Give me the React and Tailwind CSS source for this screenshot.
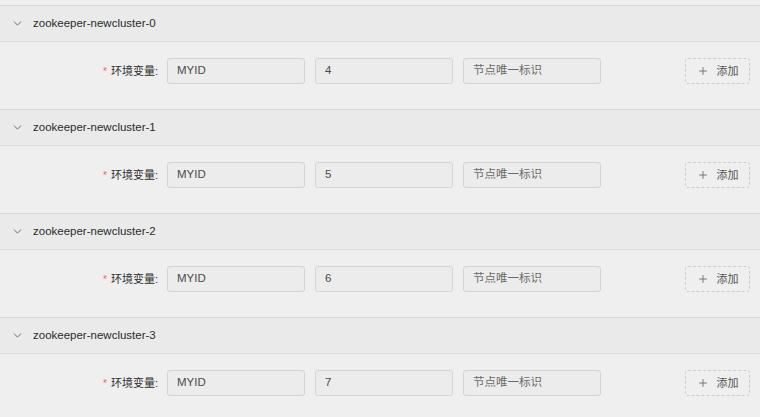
import { ChevronDown, Plus } from "lucide-react";

const clusters = [
  { name: "zookeeper-newcluster-0", id: "4" },
  { name: "zookeeper-newcluster-1", id: "5" },
  { name: "zookeeper-newcluster-2", id: "6" },
  { name: "zookeeper-newcluster-3", id: "7" },
];

function Field({ value, muted }) {
  return (
    <div
      className={`h-[26px] w-[138px] flex items-center px-[9px] rounded-[3px] border border-[#d4d4d4] bg-[#ececec] text-[11.5px] ${
        muted ? "text-[#6a6a6a]" : "text-[#4a4a4a]"
      }`}
    >
      {value}
    </div>
  );
}

function ClusterPanel({ name, id }) {
  return (
    <section className="border-t border-[#d9d9d9]">
      {/* Header */}
      <div className="h-[36px] flex items-center gap-[9px] pl-[11px] bg-[#eaeaea] border-b border-[#dcdcdc]">
        <ChevronDown size={13} strokeWidth={1.5} className="text-[#555]" />
        <span className="text-[11.5px] text-[#2a2a2a]">{name}</span>
      </div>

      {/* Env var row */}
      <div className="pt-[16px] pb-[25px] flex items-center bg-[#efefef]">
        <div className="w-[158px] flex justify-end items-center text-[11px] text-[#2f2f2f]">
          <span className="text-[#e26a6a] mr-[4px] text-[10px]">*</span>
          环境变量:
        </div>
        <div className="ml-[9px] flex gap-[10px]">
          <Field value="MYID" />
          <Field value={id} />
          <Field value="节点唯一标识" muted />
        </div>
        <button className="ml-auto mr-[10px] h-[26px] w-[65px] flex items-center justify-center gap-[8px] rounded-[3px] border border-dashed border-[#cccccc] text-[11px] text-[#555]">
          <Plus size={12} strokeWidth={1.5} />
          添加
        </button>
      </div>
    </section>
  );
}

export default function App() {
  return (
    <div
      className="w-[760px] h-[417px] overflow-hidden bg-[#efefef] pt-[5px]"
      style={{ fontFamily: '"Liberation Sans", "Noto Sans CJK SC", sans-serif' }}
    >
      {clusters.map((c) => (
        <ClusterPanel key={c.name} name={c.name} id={c.id} />
      ))}
    </div>
  );
}
